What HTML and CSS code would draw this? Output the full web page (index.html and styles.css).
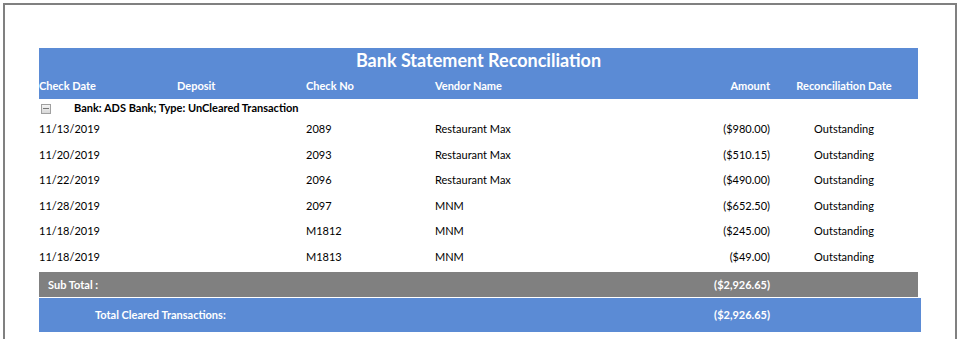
FILE: index.html
```html
<!DOCTYPE html>
<html>
<head>
<meta charset="utf-8">
<link rel="stylesheet" href="styles.css">
</head>
<body>
<div class="frame">
  <div class="report">
    <div class="head">
      <div class="title">Bank Statement Reconciliation</div>
      <div class="grid cols">
        <div>Check Date</div>
        <div>Deposit</div>
        <div>Check No</div>
        <div>Vendor Name</div>
        <div class="r">Amount</div>
        <div class="c">Reconciliation Date</div>
      </div>
    </div>
    <div class="group">
      <span class="toggle"><span class="minus"></span></span>
      <span class="gtext">Bank: ADS Bank; Type: UnCleared Transaction</span>
    </div>
    <div class="rows">
      <div class="grid row"><div>11/13/2019</div><div></div><div>2089</div><div>Restaurant Max</div><div class="r">($980.00)</div><div class="c">Outstanding</div></div>
      <div class="grid row"><div>11/20/2019</div><div></div><div>2093</div><div>Restaurant Max</div><div class="r">($510.15)</div><div class="c">Outstanding</div></div>
      <div class="grid row"><div>11/22/2019</div><div></div><div>2096</div><div>Restaurant Max</div><div class="r">($490.00)</div><div class="c">Outstanding</div></div>
      <div class="grid row"><div>11/28/2019</div><div></div><div>2097</div><div>MNM</div><div class="r">($652.50)</div><div class="c">Outstanding</div></div>
      <div class="grid row"><div>11/18/2019</div><div></div><div>M1812</div><div>MNM</div><div class="r">($245.00)</div><div class="c">Outstanding</div></div>
      <div class="grid row"><div>11/18/2019</div><div></div><div>M1813</div><div>MNM</div><div class="r">($49.00)</div><div class="c">Outstanding</div></div>
    </div>
    <div class="subtotal">
      <div class="st-label">Sub Total :</div>
      <div class="st-amt">($2,926.65)</div>
    </div>
    <div class="total">
      <div class="t-label">Total Cleared Transactions:</div>
      <div class="t-amt">($2,926.65)</div>
    </div>
  </div>
</div>
</body>
</html>
```
FILE: styles.css
```css
* { box-sizing: border-box; }
html, body { margin: 0; padding: 0; background: #fff; }
body {
  font-family: Lato, "Open Sans", sans-serif;
  font-size: 11px;
  color: #000;
  width: 958px;
  height: 339px;
  overflow: hidden;
}
.frame {
  margin: 3px 1px 0 3px;
  height: 336px;
  border: 2px solid #808080;
  border-bottom: none;
  padding: 43px 0 0 34px;
}
.report { width: 879px; }
.head {
  background: #5b8bd5;
  color: #fff;
  font-weight: bold;
  height: 51px;
}
.title {
  height: 24px;
  line-height: 24px;
  text-align: center;
  font-size: 18px;
}
.grid {
  display: grid;
  grid-template-columns: 138px 129px 129px 215px 120px 148px;
}
.grid .r { text-align: right; }
.grid .c { text-align: center; }
.cols { height: 27px; line-height: 27px; font-size: 11px; }
.group {
  height: 17px;
  display: flex;
  align-items: center;
  font-weight: bold;
  font-size: 11px;
}
.toggle {
  width: 10px;
  height: 10px;
  margin-left: 2px;
  margin-top: 2px;
  border: 1px solid #a0a0a0;
  background: linear-gradient(#f4f4f4, #d8d8d8);
  display: flex;
  align-items: center;
  justify-content: center;
}
.minus { width: 6px; height: 1px; background: #777; }
.gtext { margin-left: 23px; }
.rows { padding-bottom: 2.4px; }
.row { height: 25.6px; line-height: 25.6px; }
.subtotal {
  background: #808080;
  color: #fff;
  font-weight: bold;
  height: 25px;
  display: flex;
  align-items: center;
}
.st-label { padding-left: 9px; width: 611px; }
.st-amt { width: 120px; text-align: right; }
.total {
  margin-top: 1px;
  margin-right: -3px;
  background: #5b8bd5;
  color: #fff;
  font-weight: bold;
  height: 34px;
  display: flex;
  align-items: center;
}
.t-label { padding-left: 56px; width: 611px; }
.t-amt { width: 120px; text-align: right; }
```
